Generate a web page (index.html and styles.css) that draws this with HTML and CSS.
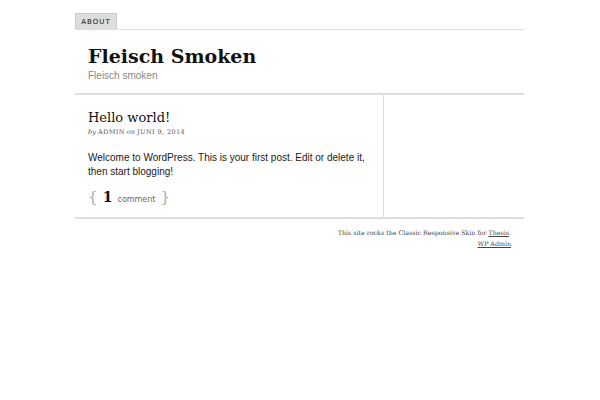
FILE: index.html
```
<!DOCTYPE html>
<html>
<head>
<meta charset="utf-8">
<link rel="stylesheet" href="styles.css">
</head>
<body>
<div class="container">
  <ul class="menu">
    <li class="tab">About</li>
  </ul>
  <div class="header">
    <div class="site-title">Fleisch Smoken</div>
    <div class="tagline">Fleisch smoken</div>
  </div>
  <div class="columns">
    <div class="content">
      <div class="post">
        <h2 class="post-title">Hello world!</h2>
        <div class="byline"><em>by</em> <span class="caps">admin</span> <em>on</em> <span class="caps">Juni 9, 2014</span></div>
        <p class="post-text">Welcome to WordPress. This is your first post. Edit or delete it, then start blogging!</p>
        <div class="comments"><span class="brace">{</span> <span class="num">1</span> <span class="word">comment</span> <span class="brace">}</span></div>
      </div>
    </div>
    <div class="sidebar"></div>
  </div>
  <div class="footer">
    <div>This site rocks the Classic Responsive Skin for <a href="#">Thesis</a>.</div>
    <div><a href="#">WP Admin</a></div>
  </div>
</div>
</body>
</html>
```
FILE: styles.css
```
html, body { margin: 0; padding: 0; background: #fff; }
body { font-family: "DejaVu Sans", sans-serif; color: #111; }
.container { width: 449px; margin-left: 75px; padding-top: 13px; }
.menu { list-style: none; margin: 0; padding: 0; display: flex; border-bottom: 1px solid #ddd; }
.tab { background: #ddd; border: 1px solid #ccc; border-bottom: none; height: 15px; width: 40px; font-size: 7px; letter-spacing: 1px; text-transform: uppercase; text-align: center; line-height: 16px; color: #111; }
.header { padding: 15px 13px 10px; border-bottom: 2px solid #ddd; }
.site-title { font-family: "DejaVu Serif", serif; font-weight: bold; font-size: 19px; line-height: 22px; color: #111; }
.tagline { margin-top: 2px; font-family: "Liberation Sans", sans-serif; font-size: 10px; color: #888; line-height: 14px; }
.columns { display: flex; border-bottom: 2px solid #ddd; }
.content { width: 309px; border-right: 1px solid #ddd; padding: 15px 6px 11px 13px; box-sizing: border-box; }
.sidebar { flex: 1; }
.post-title { margin: 0; font-family: "DejaVu Serif", serif; font-weight: normal; font-size: 13px; line-height: 16px; color: #111; }
.byline { margin-top: 2px; font-family: "DejaVu Serif", serif; font-size: 6.5px; color: #555; line-height: 9px; }
.byline em { font-style: italic; }
.caps { text-transform: uppercase; letter-spacing: 0.4px; }
.post-text { margin: 14px 0 0; font-family: "Liberation Sans", sans-serif; font-size: 10px; line-height: 14px; color: #1a1a1a; }
.comments { margin-top: 9px; font-family: "DejaVu Serif", serif; color: #888; line-height: 18px; height: 18px; }
.brace { font-size: 15px; color: #aaa; }
.num { font-size: 14px; color: #111; font-weight: bold; }
.word { font-size: 8px; color: #666; font-family: "DejaVu Sans", sans-serif; }
.footer { text-align: right; padding: 8px 13px 0; font-family: "DejaVu Serif", serif; font-size: 6.3px; line-height: 11px; color: #444; }
.footer a { color: #444; }
```
